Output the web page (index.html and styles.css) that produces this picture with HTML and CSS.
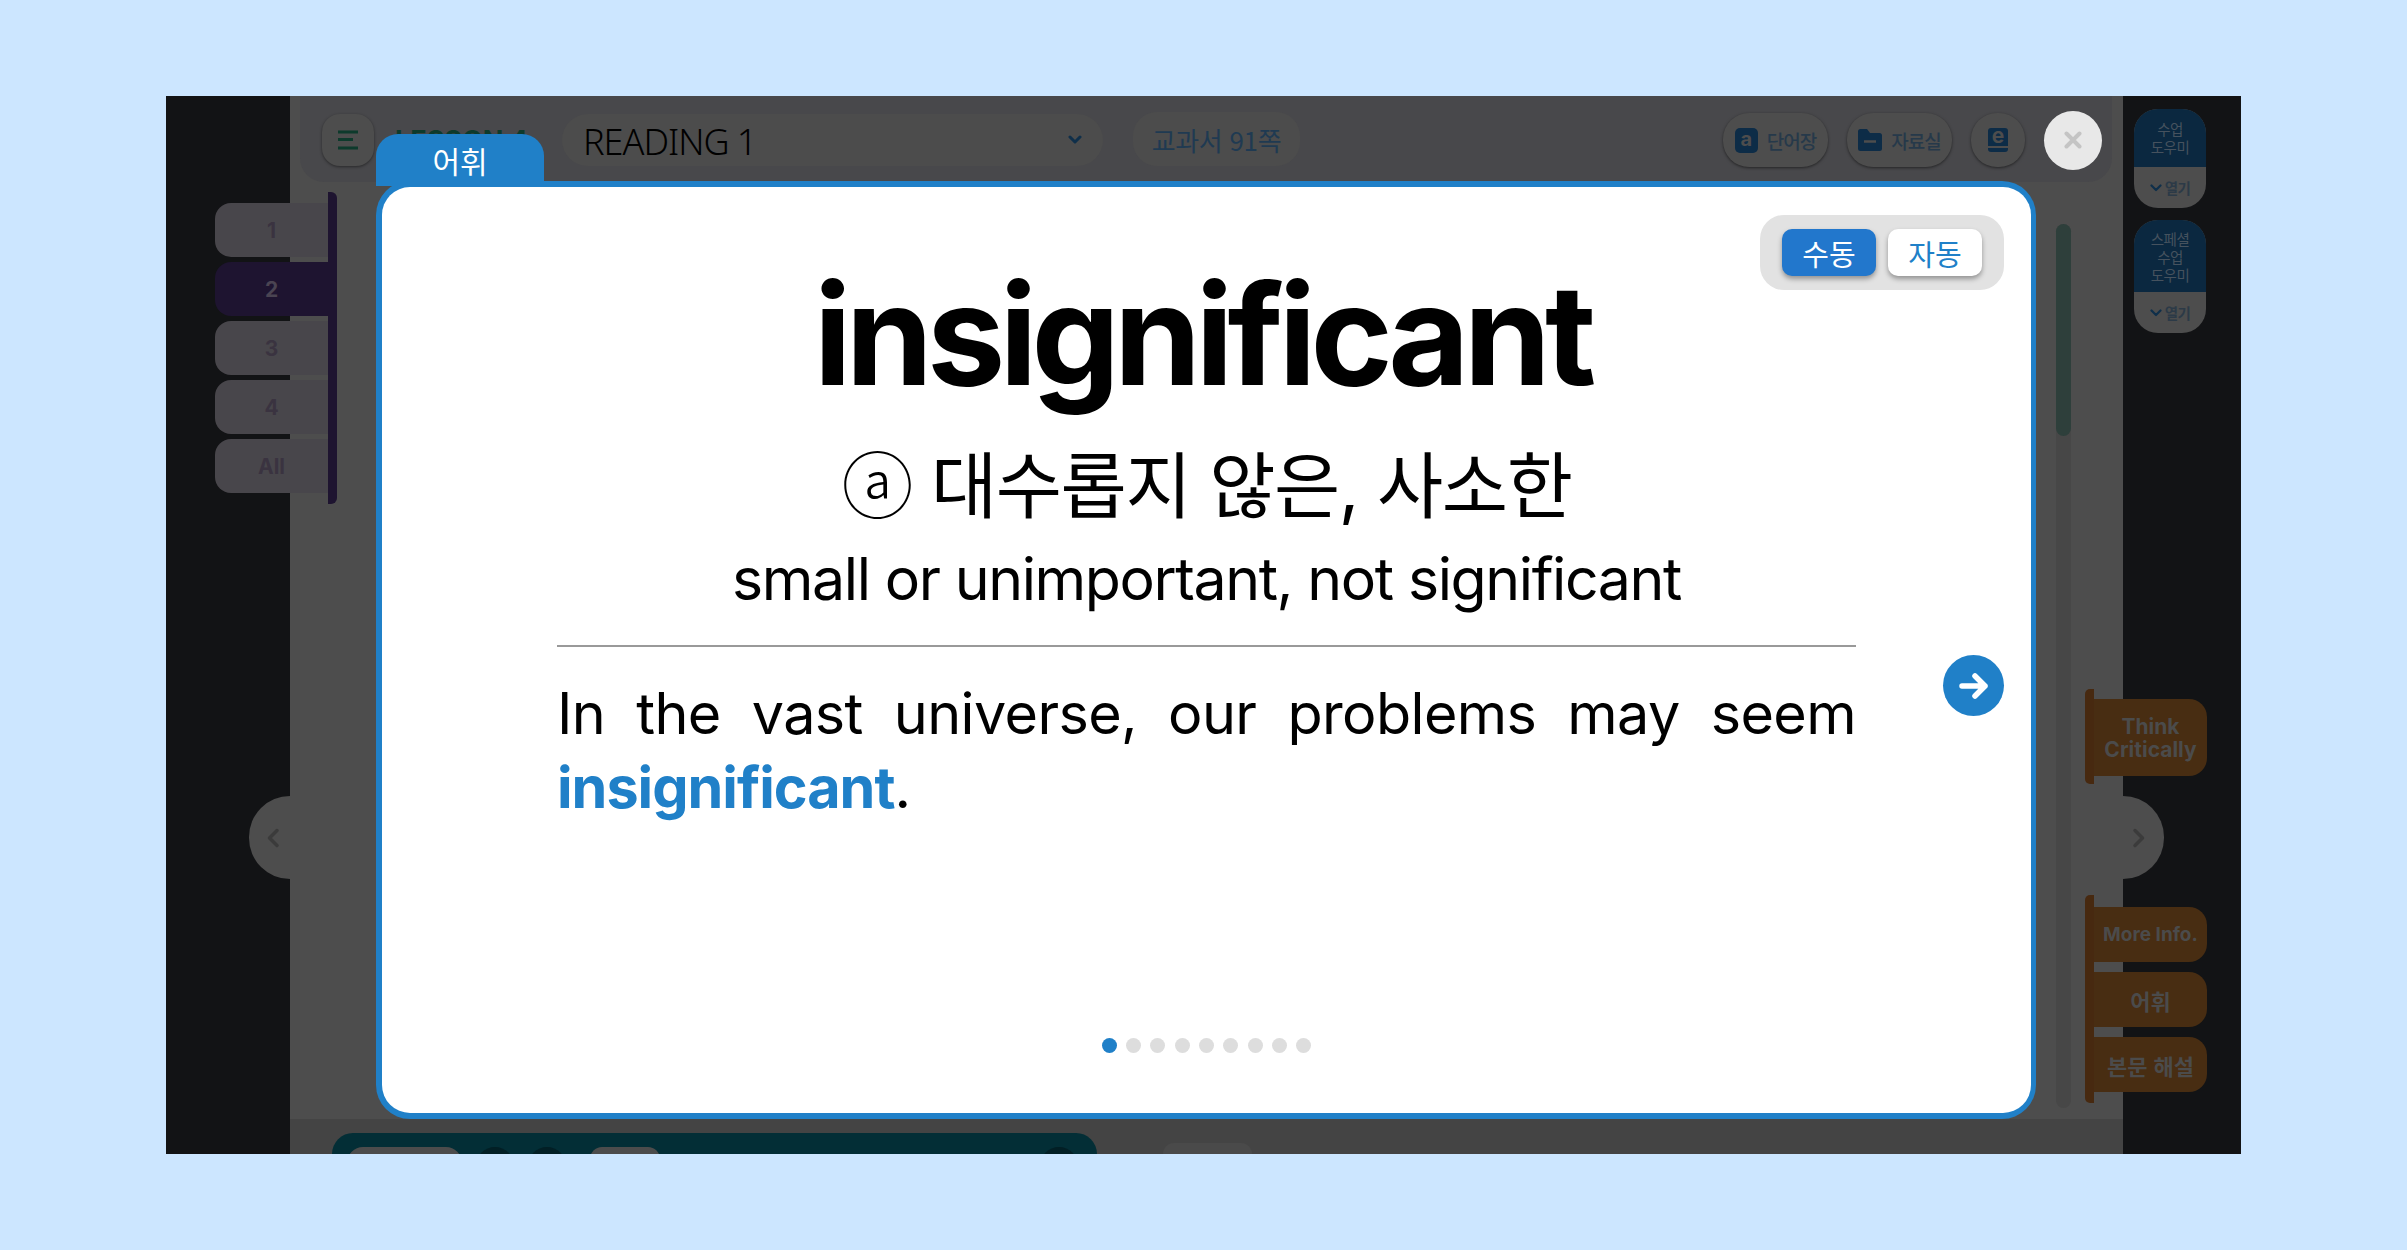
FILE: index.html
```html
<!DOCTYPE html>
<html lang="ko">
<head>
<meta charset="utf-8">
<title>insignificant</title>
<link rel="stylesheet" href="styles.css">
</head>
<body>
<div class="app">
  <div class="side side-left"></div>
  <main class="main">
    <header class="topbar">
      <button class="menu-btn" aria-label="메뉴">
        <svg width="22" height="20" viewBox="0 0 22 20"><path d="M1 2h20M1 9.500h15M1 18h20" stroke="#0d3a2c" stroke-width="3" fill="none"/></svg>
      </button>
      <span class="lesson">LESSON 4</span>
      <div class="select"><span>READING 1</span>
        <svg width="14" height="10" viewBox="0 0 14 10"><path d="M2 2l5 5 5-5" stroke="#0f2f4a" stroke-width="3" fill="none" stroke-linecap="round" stroke-linejoin="round"/></svg>
      </div>
      <div class="page-pill">교과서 91쪽</div>
      <div class="spacer"></div>
      <button class="tool-btn word-btn">
        <span class="a-icon">a</span>단어장
      </button>
      <button class="tool-btn file-btn">
        <svg width="24" height="22" viewBox="0 0 24 22"><path d="M0 2.500Q0 0 2.500 0H9l3 4h9.500Q24 4 24 6.500v13Q24 22 21.500 22h-19Q0 22 0 19.500z" fill="#0d2c47"/><path d="M6 12.500h12" stroke="#4d4d4d" stroke-width="2.500"/></svg>
        자료실
      </button>
      <button class="tool-btn ebook-btn" aria-label="e북">
        <span class="e-icon">e</span>
      </button>
      <button class="close-btn" aria-label="닫기">
        <svg width="18" height="18" viewBox="0 0 18 18"><path d="M2.500 2.500l13 13M15.500 2.500l-13 13" stroke="#c4c4c4" stroke-width="4" stroke-linecap="round"/></svg>
      </button>
    </header>
    <div class="body-area">
      <div class="scroll-track"><div class="scroll-thumb"></div></div>
    </div>
    <footer class="bottombar">
      <div class="teal-bar">
        <span class="teal-pill wide"></span>
        <span class="teal-round"></span>
        <span class="teal-round"></span>
        <span class="teal-pill"></span>
        <span class="spacer"></span>
        <span class="teal-round"></span>
      </div>
      <div class="bottom-pill"></div>
    </footer>
  </main>
  <aside class="side side-right">
    <div class="helper">
      <div class="helper-top">수업<br>도우미</div>
      <div class="helper-open"><svg width="12" height="8" viewBox="0 0 12 8"><path d="M1.500 1.500L6 6l4.500-4.500" stroke="#0f2f4a" stroke-width="2.200" fill="none" stroke-linecap="round" stroke-linejoin="round"/></svg>열기</div>
    </div>
    <div class="helper helper-tall">
      <div class="helper-top">스페셜<br>수업<br>도우미</div>
      <div class="helper-open"><svg width="12" height="8" viewBox="0 0 12 8"><path d="M1.500 1.500L6 6l4.500-4.500" stroke="#0f2f4a" stroke-width="2.200" fill="none" stroke-linecap="round" stroke-linejoin="round"/></svg>열기</div>
    </div>
  </aside>

  <nav class="rail">
    <div class="rail-tab">1</div>
    <div class="rail-tab active">2</div>
    <div class="rail-tab">3</div>
    <div class="rail-tab">4</div>
    <div class="rail-tab">All</div>
  </nav>

  <div class="half-circle half-left"><svg width="14" height="20" viewBox="0 0 14 20"><path d="M11 2.500L3.500 10l7.500 7.500" stroke="#3b3b3b" stroke-width="3.500" fill="none" stroke-linecap="round" stroke-linejoin="round"/></svg></div>
  <div class="half-circle half-right"><svg width="14" height="20" viewBox="0 0 14 20"><path d="M3 2.500L10.500 10 3 17.500" stroke="#3b3b3b" stroke-width="3.500" fill="none" stroke-linecap="round" stroke-linejoin="round"/></svg></div>

  <div class="flag-group flag-think">
    <div class="flag two-line">Think<br>Critically</div>
  </div>
  <div class="flag-group flag-more">
    <div class="flag">More Info.</div>
    <div class="flag kr">어휘</div>
    <div class="flag kr">본문 해설</div>
  </div>

  <section class="modal">
    <div class="modal-tab">어휘</div>
    <div class="card">
      <div class="toggle">
        <button class="toggle-btn on">수동</button>
        <button class="toggle-btn">자동</button>
      </div>
      <h1 class="word">insignificant</h1>
      <p class="meaning"><span class="pos">ⓐ</span> 대수롭지 않은, 사소한</p>
      <p class="definition">small or unimportant, not significant</p>
      <hr class="rule">
      <p class="example">In the vast universe, our problems may seem <b>insignificant</b>.</p>
      <button class="next-btn" aria-label="다음">
        <svg width="30" height="28" viewBox="0 0 30 28"><path d="M3 14h23M16 4l10 10-10 10" stroke="#fff" stroke-width="5.500" fill="none" stroke-linecap="round" stroke-linejoin="round"/></svg>
      </button>
      <div class="dots">
        <span class="dot on"></span><span class="dot"></span><span class="dot"></span><span class="dot"></span><span class="dot"></span><span class="dot"></span><span class="dot"></span><span class="dot"></span><span class="dot"></span>
      </div>
    </div>
  </section>
</div>
</body>
</html>
```
FILE: styles.css
```css
* { box-sizing: border-box; }
html, body { margin: 0; height: 100%; }
body {
  background: #cce6ff;
  padding: 96px 166px;
  font-family: Inter, "Noto Sans CJK KR", sans-serif;
  overflow: hidden;
}
button { border: 0; padding: 0; font: inherit; }

.app {
  position: relative;
  width: 2075px;
  height: 1058px;
  overflow: hidden;
  display: grid;
  grid-template-columns: 124px 1833px 118px;
  background: #121315;
}
.side { background: #121315; }

/* main column */
.main {
  background: #4d4d4d;
  display: flex;
  flex-direction: column;
  height: 1058px;
}
.topbar {
  margin: 0 11px 0 10px;
  height: 86px;
  flex: none;
  background: #48484b;
  border-radius: 0 0 24px 24px;
  display: flex;
  align-items: center;
  padding: 2px 10px 0 22px;
}
.menu-btn {
  width: 52px; height: 52px;
  border-radius: 18px;
  background: #4d4d4d;
  box-shadow: 0 1px 3px rgba(0,0,0,.45);
  display: flex; align-items: center; justify-content: center;
  flex: none;
}
.lesson {
  margin-left: 21px;
  width: 167px;
  flex: none;
  font-size: 27px;
  font-weight: 700;
  color: #0d3a2c;
  white-space: nowrap;
}
.select {
  width: 541px; height: 52px;
  flex: none;
  border-radius: 26px;
  background: #4c4c4c;
  display: flex; align-items: center; justify-content: space-between;
  padding: 0 21px;
  font-family: "Noto Sans", sans-serif;
  font-size: 36px;
  font-weight: 300;
  letter-spacing: -1px;
  color: #000;
}
.select span { position: relative; top: 1px; }
.page-pill {
  width: 167px; height: 54px;
  margin: -2px 0 0 30px;
  flex: none;
  border-radius: 24px;
  background: #4c4c4c;
  color: #1f3a52;
  font-size: 26px;
  display: flex; align-items: center; justify-content: center;
  font-family: "Noto Sans CJK KR", sans-serif;
  letter-spacing: -.3px;
}
.spacer { flex: 1; }
.tool-btn {
  height: 54px;
  margin-left: 19px;
  flex: none;
  border-radius: 26px;
  background: #4d4d4d;
  box-shadow: 0 1px 3px rgba(0,0,0,.5);
  display: flex; align-items: center; justify-content: center; gap: 9px;
  color: #26394a;
  font-family: "Noto Sans CJK KR", sans-serif;
  font-size: 19px;
  font-weight: 500;
  letter-spacing: -1px;
}
.word-btn, .file-btn { width: 105px; }
.ebook-btn { width: 54px; }
.a-icon {
  width: 23px; height: 25px;
  border-radius: 5px;
  background: #0d2c47;
  color: #4d4d4d;
  font-family: Inter, sans-serif;
  font-weight: 700;
  font-size: 20px;
  line-height: 23px;
  text-align: center;
  letter-spacing: 0;
}
.e-icon {
  width: 20px; height: 24px;
  border-radius: 3px;
  background: linear-gradient(#0d2c47 0 18px, #4d4d4d 18px 20px, #0d2c47 20px);
  color: #4d4d4d;
  font-family: Inter, sans-serif;
  font-weight: 700;
  font-size: 21px;
  line-height: 16px;
  text-align: center;
  letter-spacing: 0;
}
.close-btn {
  width: 58px; height: 59px;
  margin-left: 19px;
  flex: none;
  border-radius: 50%;
  background: #e8e8e8;
  display: flex; align-items: center; justify-content: center;
}
.body-area {
  flex: 1;
  display: flex;
  justify-content: flex-end;
  padding: 42px 52px 11px 0;
}
.scroll-track {
  width: 15px;
  background: #474747;
  border-radius: 8px;
}
.scroll-thumb {
  height: 212px;
  background: #2e3f3b;
  border-radius: 8px;
}
.bottombar {
  height: 35px;
  flex: none;
  background: #444;
  display: flex;
  align-items: flex-end;
  padding-left: 42px;
}
.teal-bar {
  width: 765px; height: 21px;
  background: #032e36;
  border-radius: 24px 24px 0 0;
  display: flex;
  align-items: flex-start;
  overflow: hidden;
  padding: 14px 19px 0 15px;
  gap: 14px;
}
.teal-pill {
  width: 70px; height: 40px;
  flex: none;
  background: #4c4c4c;
  border-radius: 12px;
}
.teal-pill.wide { width: 115px; border-radius: 16px; }
.teal-round {
  width: 38px; height: 38px;
  flex: none;
  background: #021f25;
  border-radius: 50%;
}
.teal-round + .teal-pill { margin-left: 10px; }
.bottom-pill {
  width: 89px; height: 11px;
  margin-left: 66px;
  background: #4a4a4a;
  border-radius: 16px 16px 0 0;
}

/* right column */
.side-right {
  display: flex;
  flex-direction: column;
  align-items: flex-start;
  gap: 12px;
  padding: 13px 0 0 11px;
}
.helper {
  width: 72px;
  border-radius: 24px;
  overflow: hidden;
  background: #4d4d4d;
  font-family: "Noto Sans CJK KR", sans-serif;
  text-align: center;
}
.helper-top {
  background: #0b2840;
  color: #46525e;
  font-size: 14.500px;
  line-height: 18px;
  padding: 11px 0;
  letter-spacing: -.5px;
}
.helper-tall .helper-top { padding: 10px 0 8px; }
.helper-open {
  height: 41px;
  display: flex; align-items: center; justify-content: center; gap: 3px;
  color: #2c3a47;
  font-size: 14.500px;
  font-weight: 700;
  letter-spacing: -.5px;
}

/* left rail */
.rail {
  position: absolute;
  left: 49px; top: 96px;
  width: 122px; height: 312px;
  padding: 11px 0 0;
  border-right: 9px solid #1e1430;
  border-radius: 0 6px 6px 0;
  display: flex;
  flex-direction: column;
  gap: 5px;
}
.rail-tab {
  width: 113px; height: 54px;
  border-radius: 16px 0 0 16px;
  background: #48464b;
  color: #3a3340;
  font-size: 21px;
  font-weight: 700;
  display: flex; align-items: center; justify-content: center;
}
.rail-tab.active { background: #1e1430; color: #4a4452; }

.half-circle {
  position: absolute;
  top: 700px;
  width: 41px; height: 83px;
  background: #4d4d4d;
  display: flex; align-items: center;
}
.half-left { left: 83px; border-radius: 41px 0 0 41px; padding-left: 17px; }
.half-right { left: 1957px; border-radius: 0 41px 41px 0; padding-left: 9px; }

/* orange flags */
.flag-group {
  position: absolute;
  left: 1919px;
  width: 122px;
  border-left: 9px solid #472910;
  border-radius: 5px;
  display: flex;
  flex-direction: column;
  justify-content: center;
  gap: 10px;
}
.flag-think { top: 593px; height: 95px; padding-top: 2px; }
.flag-more { top: 799px; height: 208px; padding-top: 1px; }
.flag {
  height: 55px;
  background: #482d12;
  border-radius: 0 18px 18px 0;
  color: #4b4b4b;
  font-size: 19px;
  font-weight: 700;
  display: flex; align-items: center; justify-content: center;
  text-align: center;
}
.flag.two-line { height: 77px; font-size: 21px; line-height: 23px; }
.flag.kr { font-family: "Noto Sans CJK KR", sans-serif; font-size: 22px; }

/* modal */
.modal {
  position: absolute;
  left: 210px; top: 85px;
  width: 1660px; height: 938px;
  background: #2080c8;
  border-radius: 34px;
}
.modal-tab {
  position: absolute;
  left: 0; top: -47px;
  width: 168px; height: 52px;
  border-radius: 22px 22px 0 0;
  background: #2080c8;
  color: #fff;
  font-family: "Noto Sans CJK KR", sans-serif;
  font-size: 30px;
  line-height: 52px;
  text-align: center;
}
.card {
  position: absolute;
  inset: 6px 5px 6px 6px;
  background: #fff;
  border-radius: 28px;
  display: flex;
  flex-direction: column;
  align-items: center;
  padding: 0 175px;
  color: #000;
}
.toggle {
  position: absolute;
  right: 27px; top: 28px;
  width: 244px; height: 75px;
  background: #e2e2e2;
  border-radius: 24px;
  display: flex;
  align-items: center;
  gap: 12px;
  padding: 0 22px;
}
.toggle-btn {
  width: 94px; height: 47px;
  border-radius: 10px;
  background: #fff;
  color: #2080c8;
  font-family: "Noto Sans CJK KR", sans-serif;
  font-size: 29px;
  line-height: 44px;
  box-shadow: 0 3px 5px rgba(0,0,0,.35);
}
.toggle-btn.on { background: #2277cc; color: #fff; }
.word {
  margin: 65px 0 0 -9px;
  font-size: 140px;
  font-weight: 650;
  line-height: 165px;
  letter-spacing: -5.900px;
  white-space: nowrap;
}
.meaning {
  margin: 14px 0 0;
  font-family: Inter, "Noto Sans CJK KR", sans-serif;
  font-size: 72px;
  line-height: 100px;
  letter-spacing: -1.400px;
}
.pos { font-family: "Noto Sans CJK KR", sans-serif; font-weight: 300; }
.definition {
  margin: 4px 0 0;
  font-size: 59px;
  line-height: 78px;
  letter-spacing: -1.400px;
  white-space: nowrap;
}
.rule {
  width: 1299px;
  margin: 27px 0 0;
  border: 0;
  border-top: 2px solid #999;
}
.example {
  width: 1299px;
  margin: 29px 0 0;
  font-size: 57.500px;
  line-height: 74px;
  text-align: justify;
  letter-spacing: -.6px;
}
.example b { color: #2080c8; font-weight: 700; letter-spacing: -1px; }
.next-btn {
  position: absolute;
  left: 1561px; top: 468px;
  width: 61px; height: 61px;
  border-radius: 50%;
  background: #2080c8;
  display: flex; align-items: center; justify-content: center;
}
.dots {
  position: absolute;
  left: 0; right: 0; bottom: 60px;
  display: flex;
  justify-content: center;
  gap: 9.300px;
}
.dot { width: 15px; height: 15px; border-radius: 50%; background: #ddd; }
.dot.on { background: #2080c8; }
```
